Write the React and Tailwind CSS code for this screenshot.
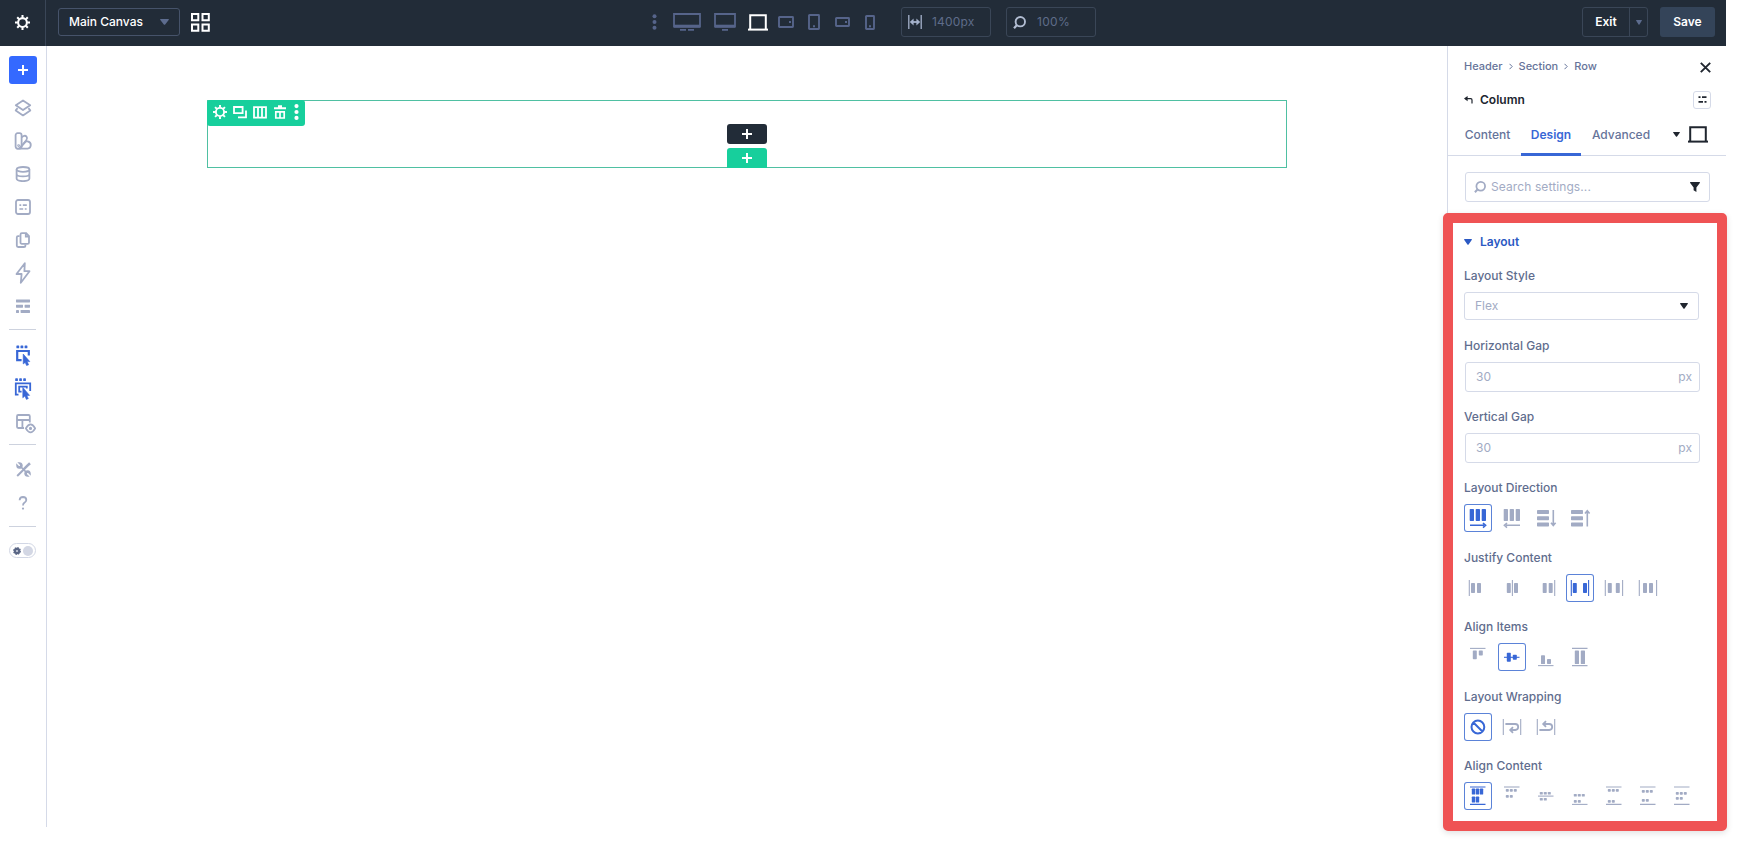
import clsx from "clsx";

// Small helper around <svg>, every icon inherits the text colour
function Icon({ w = 20, h = w, sw = 1.8, fill = "none", children }) {
    return (
        <svg width={w} height={h} viewBox={`0 0 ${w} ${h}`} fill={fill} stroke={fill === "none" ? "currentColor" : "none"} strokeWidth={sw} className="shrink-0">
            {children}
        </svg>
    );
}

function Rects({ items, r = 0.6 }) {
    return items.map(([x, y, w, h], i) => (
        <rect key={i} x={x} y={y} width={w} height={h} rx={r} fill="currentColor" stroke="none" />
    ));
}

function Gear({ size = 15 }) {
    return (
        <svg width={size} height={size} viewBox="0 0 14 14" fill="none" stroke="currentColor" className="shrink-0">
            <circle cx="7" cy="7" r="4.1" strokeWidth="1.9" />
            {[0, 45, 90, 135, 180, 225, 270, 315].map((a) => (
                <path key={a} d="M7 0V2.6" strokeWidth="1.9" transform={`rotate(${a} 7 7)`} />
            ))}
        </svg>
    );
}

function Caret({ w = 8, h = 6 }) {
    return (
        <svg width={w} height={h} viewBox="0 0 8 6" fill="currentColor" preserveAspectRatio="none" className="shrink-0">
            <path d="M0.6 0H7.4Q8.3 0.2 7.7 1L4.6 5.4Q4 6 3.4 5.4L0.3 1Q-0.3 0.2 0.6 0Z" />
        </svg>
    );
}

function Plus({ size = 10 }) {
    return (
        <svg width={size} height={size} viewBox="0 0 10 10" stroke="currentColor" strokeWidth="2" className="shrink-0">
            <path d="M5 0V10M0 5H10" />
        </svg>
    );
}

function Search({ size = 13 }) {
    return (
        <svg width={size} height={size} viewBox="0 0 13 13" fill="none" stroke="currentColor" className="shrink-0">
            <circle cx="7.3" cy="5.7" r="4.7" strokeWidth="1.9" />
            <path d="M4 9L1 12.2" strokeWidth="2.2" />
        </svg>
    );
}

function Laptop() {
    return (
        <Icon w={20} h={17} sw={2}>
            <path d="M2.2 15V1.2H17.8V15" />
            <path d="M0 15.6H20" strokeWidth="2" />
        </Icon>
    );
}

function TopBar() {
    return (
        <header className="flex h-[46px] w-[1726px] items-center bg-[#222c38] text-white">
            <div className="flex h-full w-[46px] items-center justify-center border-r border-[#3a4657] pb-0.5">
                <Gear />
            </div>
            <div className="ml-3 flex h-[28px] w-[122px] -translate-y-px items-center justify-between rounded-[3px] border border-[#46536a] pr-2.5 pl-2.5">
                <span className="text-[12px] font-medium">Main Canvas</span>
                <span className="text-[#5d6c8e]"><Caret w={9} h={6} /></span>
            </div>
            <div className="ml-[11px] -translate-y-px">
                <Icon w={19} sw={2}>
                    <path d="M1 1H7.3V7.3H1ZM11.5 1H17.8V7.3H11.5ZM1 11.5H7.3V17.8H1ZM11.5 11.5H17.8V17.8H11.5Z" />
                </Icon>
            </div>

            {/* Breakpoints */}
            <div className="ml-[442px] flex -translate-y-px items-center text-[#56648a]">
                <Icon w={5} h={16} fill="currentColor">
                    <circle cx="2.5" cy="2.2" r="2" />
                    <circle cx="2.5" cy="8" r="2" />
                    <circle cx="2.5" cy="13.8" r="2" />
                </Icon>
                <div className="ml-4">
                    <Icon w={28} h={18}>
                        <path d="M1 1H27V13.5H1Z" />
                        <path d="M1 13.2H27" strokeWidth="3" />
                        <path d="M7 16.9H13M15 16.9H21" />
                    </Icon>
                </div>
                <div className="ml-[13px]">
                    <Icon w={22} h={18}>
                        <path d="M1 1H21V13.5H1Z" />
                        <path d="M1 13.2H21" strokeWidth="3" />
                        <path d="M8 16.9H14" />
                    </Icon>
                </div>
                <div className="ml-3 text-white"><Laptop /></div>
                <div className="ml-[10px]">
                    <Icon w={16} h={12} sw={1.9}>
                        <rect x="1" y="1" width="14" height="10" rx="0.5" />
                        <path d="M11 6H13" />
                    </Icon>
                </div>
                <div className="ml-[14px]">
                    <Icon w={12} h={16} sw={1.9}>
                        <rect x="1" y="1" width="10" height="14" rx="0.5" />
                        <path d="M5 12.2H7" />
                    </Icon>
                </div>
                <div className="ml-[15px]">
                    <Icon w={15} h={10} sw={1.9}>
                        <rect x="1" y="1" width="13" height="8" rx="0.5" />
                        <path d="M10 5H12" />
                    </Icon>
                </div>
                <div className="ml-[15px]">
                    <Icon w={10} h={15} sw={1.9}>
                        <rect x="1" y="1" width="8" height="13" rx="0.5" />
                        <path d="M4 11.2H6" />
                    </Icon>
                </div>
            </div>
            <div className="ml-[26px] flex h-[30px] w-[90px] -translate-y-px items-center gap-2.5 rounded-[3px] border border-[#3a4657] pl-1.5 text-[12px] text-[#5f6c8a]">
                <span className="text-[#a4b1cb]">
                    <Icon w={14} h={14} sw={1.3}>
                        <path d="M0.8 0V14M13.2 0V14" />
                        <path d="M3 7H11" strokeWidth="1.8" />
                        <path d="M5.6 3.4V10.6L1.8 7ZM8.4 3.4V10.6L12.2 7Z" fill="currentColor" stroke="none" />
                    </Icon>
                </span>
                <span className="tracking-[0.2px]">1400px</span>
            </div>
            <div className="ml-[15px] flex h-[30px] w-[90px] -translate-y-px items-center gap-[11px] rounded-[3px] border border-[#3a4657] pl-1.5 text-[12px] text-[#5f6c8a]">
                <span className="text-[#b2bdd2]"><Search /></span>
                <span className="tracking-[0.3px]">100%</span>
            </div>

            <div className="ml-auto flex h-[30px] w-[66px] -translate-y-px items-center rounded-[3px] border border-[#3a4657]">
                <span className="w-[46px] text-center text-[12px] font-semibold">Exit</span>
                <span className="flex h-full flex-1 items-center justify-center border-l border-[#3a4657] text-[#5d6c8e]"><Caret w={6} h={5} /></span>
            </div>
            <button className="mr-[11px] ml-3 h-[30px] w-[55px] -translate-y-px rounded-[3px] bg-[#344459] text-[12px] font-semibold">Save</button>
        </header>
    );
}

function Slot({ children, className }) {
    return <div className={clsx("flex shrink-0 items-center justify-center", className ?? "h-[33.1px]")}>{children}</div>;
}

function Sidebar() {
    return (
        <aside className="flex w-[47px] shrink-0 flex-col border-r border-[#d5dae8] pt-[10px] text-[#a2abc4]">
            <div className="ml-[9px] flex size-[28px] items-center justify-center rounded-[3px] bg-[#3469ff] text-white">
                <Plus />
            </div>
            <div className="mt-[7px]">
                <Slot>
                    <Icon w={18}>
                        <path d="M9 1.5L16.2 6.2L9 11L1.8 6.2Z" strokeLinejoin="round" />
                        <path d="M3.6 9.2L1.7 11.4L9 16.4L16.3 11.4L14.4 9.2" strokeLinejoin="round" />
                    </Icon>
                </Slot>
                <Slot>
                    <Icon w={18}>
                        <rect x="1.6" y="1.2" width="6" height="15.4" rx="2" />
                        <path d="M7.6 5.2L9.6 4Q11.4 3.2 12.6 4.8Q13.8 6.4 12.4 8L7.2 14.6" />
                        <path d="M12 9.4H13.6Q16.8 10 16.8 13Q16.6 16.4 13.6 16.6H5L12 9.4" />
                        <circle cx="4.6" cy="13.6" r="0.5" />
                    </Icon>
                </Slot>
                <Slot>
                    <Icon w={16}>
                        <ellipse cx="8" cy="3.4" rx="6.4" ry="2.4" />
                        <path d="M1.6 3.4V12.6C1.6 16 14.4 16 14.4 12.6V3.4M1.6 8C1.6 11.2 14.4 11.2 14.4 8" />
                    </Icon>
                </Slot>
                <Slot>
                    <Icon w={16}>
                        <rect x="1" y="1" width="14" height="14" rx="2" />
                        <path d="M4.4 6.2H6.2M7.8 6.2H11.8M4.4 10H8.2M9.8 10H11.6" strokeWidth="1.7" />
                    </Icon>
                </Slot>
                <Slot>
                    <Icon w={16}>
                        <path d="M6.9 1.2H11.2L14 4V10.4Q14 11.8 12.6 11.8H6.9Q5.5 11.8 5.5 10.4V2.6Q5.5 1.2 6.9 1.2ZM10.8 1.2V4.6H14" />
                        <path d="M4.6 4.2H3Q1.8 4.2 1.8 5.6V13.6Q1.8 15 3.2 15H8.8Q10.4 15 10.4 13.4V12.4" />
                    </Icon>
                </Slot>
                <Slot>
                    <Icon w={16} h={22}>
                        <path d="M9.8 1.2L1.5 12H6.6L5.8 20.8L14.5 9.2H9.4Z" strokeLinejoin="round" />
                    </Icon>
                </Slot>
                <Slot>
                    <Icon w={14} h={14}>
                        <Rects items={[[0, 0.4, 14, 3], [0, 5.7, 7, 3], [8.6, 5.7, 5.4, 3], [0, 11, 3, 3], [4.6, 11, 9.4, 3]]} r={0.4} />
                    </Icon>
                </Slot>
            </div>
            <div className="mt-[6.5px] ml-[9px] h-px w-[27px] bg-[#cdd2de]" />
            <div className="mt-[9px] text-[#3867d6]">
                <Slot className="h-[33px]">
                    <Icon w={16} h={21} sw={2.2}>
                        <Rects items={[[1.4, 0.5, 2.8, 2.8], [5.5, 0.5, 2.8, 2.8], [9.6, 0.5, 2.8, 2.8]]} />
                        <path d="M6.6 15.2H2.2V6H13.8V10.5" />
                        <path d="M8.2 9V19L10.2 17.4L11.6 20.6L13.6 19.8L12.2 16.6H14.8Z" fill="currentColor" stroke="currentColor" strokeWidth="0.6" />
                    </Icon>
                </Slot>
                <Slot className="h-[33px]">
                    <Icon w={18} h={22} sw={1.8}>
                        <Rects items={[[1.2, 0.3, 2.7, 2.7], [5.2, 0.3, 2.7, 2.7], [9.2, 0.3, 2.7, 2.7]]} />
                        <path d="M4.5 16.6H1.8V5.4H16.2V13" />
                        <path d="M7.6 13.6H5.2V8.7H12.8V10.4" />
                        <path d="M8.8 9.4V19.8L10.9 18L12.4 21.4L14.3 20.6L12.8 17.4H15.6Z" fill="currentColor" stroke="currentColor" strokeWidth="0.6" />
                    </Icon>
                </Slot>
            </div>
            <Slot className="h-[35px] pt-[2px] pl-[5px] text-[#a2abc4]">
                <Icon w={20} h={20}>
                    <path d="M8 14H2.2Q1 14 1 12.8V2.2Q1 1 2.2 1H12.6Q13.8 1 13.8 2.2V8.4M1 6H13.8M6.4 6V14" />
                    <path d="M9.8 14.4Q14.6 6.4 19.2 14.4Q14.6 22.4 9.8 14.4Z" />
                    <circle cx="14.5" cy="14.4" r="0.7" fill="currentColor" />
                </Icon>
            </Slot>
            <div className="mt-[4px] ml-[9px] h-px w-[27px] bg-[#cdd2de]" />
            <div className="mt-[8px]">
                <Slot className="h-[33px]">
                    <Icon w={15} sw={1.7}>
                        <path d="M1.2 14L8 7.2" strokeWidth="2" />
                        <path d="M7.4 7.6L11.4 3.6L14 1.2" strokeWidth="2.6" />
                        <path d="M4 4L11 11" />
                        <path d="M3.4 1.2L4.8 2.6V4.8H2.6L1.1 3.4Q1.2 5.8 3.2 6Q5.8 6 5.9 3.4Q5.6 1.2 3.4 1.2Z" />
                        <path d="M11.6 13.8L10.2 12.4V10.2H12.4L13.9 11.6Q13.8 9.2 11.8 9Q9.2 9 9.1 11.6Q9.4 13.8 11.6 13.8Z" />
                    </Icon>
                </Slot>
                <Slot className="h-[33px]">
                    <Icon w={10} h={14} sw={1.8}>
                        <path d="M1.6 4.2Q1.8 1 5 1Q8.3 1.1 8.3 4Q8.2 5.4 6.6 6.6Q5 7.6 5 9.6" />
                        <circle cx="5" cy="12.6" r="1.1" fill="currentColor" stroke="none" />
                    </Icon>
                </Slot>
            </div>
            <div className="mt-[7px] ml-[9px] h-px w-[27px] bg-[#cdd2de]" />
            <div className="mt-[16px] ml-[9px] flex h-[15px] w-[27px] items-center justify-between rounded-full border border-[#d2d7e5] px-[2.5px]">
                <span className="text-[#5a6685]">
                    <svg width="8" height="8" viewBox="0 0 8 8">
                        <circle cx="4" cy="4" r="3.2" fill="currentColor" stroke="currentColor" strokeWidth="1.4" strokeDasharray="1.5 1" />
                        <circle cx="4" cy="4" r="1.1" fill="#c9cfdd" />
                    </svg>
                </span>
                <span className="size-[10px] rounded-full bg-[#d3d7e4]" />
            </div>
        </aside>
    );
}

function Canvas() {
    return (
        <main className="w-[1400px] shrink-0 pt-[54px] pl-[160px]">
            <div className="relative flex h-[68px] w-[1080px] flex-col items-center border-[1.5px] border-[#4fc0a2] pt-[23px]">
                <div className="absolute -top-px -left-px flex h-[26px] w-[98px] items-center rounded-[3px] bg-[#17cf9c] pb-0.5 pl-[6px] text-white">
                    <Gear size={14} />
                    <div className="ml-[6px]">
                        <Icon w={14} h={13}>
                            <path d="M1 1H9.6V7.2H1Z" />
                            <path d="M13 4.4V11.4H5" />
                        </Icon>
                    </div>
                    <div className="ml-[6px]">
                        <Icon w={14} h={13}>
                            <path d="M1 1.2H13V11.6H1ZM5 1V12M9 1V12" />
                        </Icon>
                    </div>
                    <div className="ml-[7px]">
                        <Icon w={12} h={14} sw={1.7}>
                            <path d="M0 3.2H12M4 1.2H8" strokeWidth="2" />
                            <path d="M1.8 6.8H10.2V13H1.8ZM6 6.4V13" />
                        </Icon>
                    </div>
                    <div className="ml-[8px]">
                        <Icon w={5} h={16} fill="currentColor">
                            <circle cx="2.5" cy="2.1" r="2.1" />
                            <circle cx="2.5" cy="8" r="2.1" />
                            <circle cx="2.5" cy="13.9" r="2.1" />
                        </Icon>
                    </div>
                </div>
                <button className="mr-px flex h-[20px] w-[40px] shrink-0 items-center justify-center rounded-[3px] bg-[#222c38] text-white"><Plus /></button>
                <button className="mt-1 mr-px flex h-[20px] w-[40px] shrink-0 items-center justify-center rounded-t-[3px] bg-[#17cf9c] text-white"><Plus /></button>
            </div>
        </main>
    );
}

function ArrowH({ left }) {
    return left ? (
        <path d="M22 21.3H8M9 19L6.4 21.3L9 23.6" strokeWidth="1.6" />
    ) : (
        <path d="M6 21.3H20M19 19L21.6 21.3L19 23.6" strokeWidth="1.6" />
    );
}

// Align-content icons: a row of three dots over a row of two
const dots = (a, b) => [
    [7.8, a, 3, 2.7], [11.8, a, 3, 2.7], [15.8, a, 3, 2.7],
    [7.8, b, 3, 2.7], [11.8, b, 3, 2.7],
];

const groups = [
    {
        label: "Layout Direction",
        active: 0,
        icons: [
            { rects: [[5.7, 5, 4.3, 12], [11.7, 5, 4.3, 12], [17.7, 5, 4.3, 12]], extra: <ArrowH /> },
            { rects: [[5.7, 5, 4.3, 12], [11.7, 5, 4.3, 12], [17.7, 5, 4.3, 12]], extra: <ArrowH left /> },
            { rects: [[5, 6, 12, 4], [5, 12.2, 12, 4], [5, 18.4, 12, 4]], extra: <path d="M21.3 6V21M19 18.8L21.3 21.6L23.6 18.8" strokeWidth="1.6" /> },
            { rects: [[5, 6, 12, 4], [5, 12.2, 12, 4], [5, 18.4, 12, 4]], extra: <path d="M21.3 22.4V7M19 9.6L21.3 6.8L23.6 9.6" strokeWidth="1.6" /> },
        ],
    },
    {
        label: "Justify Content",
        active: 3,
        icons: [
            { rects: [[7, 9, 4, 10], [13, 9, 4, 10]], lines: "M5.3 6V22" },
            { rects: [[8.8, 9, 4, 10], [16, 9, 4, 10]], lines: "M14.4 6V22" },
            { rects: [[10.7, 9, 4, 10], [16.7, 9, 4, 10]], lines: "M22.7 6V22" },
            { rects: [[6.8, 9, 4, 10], [17, 9, 4, 10]], lines: "M5.3 6V22M22.6 6V22" },
            { rects: [[7.8, 9, 4, 10], [15.8, 9, 4, 10]], lines: "M5.3 6V22M22.6 6V22" },
            { rects: [[9, 9, 4, 10], [15, 9, 4, 10]], lines: "M5.3 6V22M22.6 6V22" },
        ],
    },
    {
        label: "Align Items",
        active: 1,
        icons: [
            { rects: [[8.8, 7.4, 4, 8.8], [14.8, 7.4, 4, 5]], lines: "M6 5.4H21.5" },
            { rects: [[8.8, 9.8, 4, 9], [14.8, 11.8, 4, 5]], lines: "M6 14.3H21.5" },
            { rects: [[9, 12.3, 4, 8.8], [15, 16, 4, 5]], lines: "M6 22.6H21.5" },
            { rects: [[8.8, 7.4, 4.2, 13.7], [14.8, 7.4, 4.2, 13.7]], lines: "M6 5.4H21.5M6 22.6H21.5" },
        ],
    },
    {
        label: "Layout Wrapping",
        active: 0,
        icons: [
            { extra: <path d="M20.3 14A6.4 6.4 0 1 1 7.5 14A6.4 6.4 0 1 1 20.3 14M9.4 9.5L18.4 18.5" strokeWidth="2" /> },
            { lines: "M5.3 6V22M22.7 6V22", extra: <path d="M7.4 11H17.2Q20.2 11.2 20.2 14Q20.2 16.8 17.2 17H13M15 14.2L12.2 17L15 19.8" strokeWidth="1.8" /> },
            { lines: "M5.3 6V22M22.7 6V22", extra: <path d="M7.4 17H17.2Q20.2 16.8 20.2 14Q20.2 11.2 17.2 11H12M14 8.2L11.2 11L14 13.8" strokeWidth="1.8" /> },
        ],
    },
    {
        label: "Align Content",
        active: 0,
        icons: [
            { rects: [[7.8, 6.6, 3.4, 6], [11.8, 6.6, 3.4, 6], [15.8, 6.6, 3.4, 6], [7.8, 14.6, 3.4, 6], [11.8, 14.6, 3.4, 6]], lines: "M6 5H21.5M6 22.4H21.5" },
            { rects: dots(7, 13), lines: "M6 5H21.5" },
            { rects: dots(9.9, 15.9), lines: "M6 14.1H21.5" },
            { rects: dots(11.9, 18), lines: "M6 22.4H21.5" },
            { rects: dots(7, 18), lines: "M6 5H21.5M6 22.4H21.5" },
            { rects: dots(8, 17), lines: "M6 5H21.5M6 22.4H21.5" },
            { rects: dots(10, 15), lines: "M6 5H21.5M6 22.4H21.5" },
        ],
    },
];

function Label({ children }) {
    return <div className="h-4 text-[12px] leading-4 font-medium text-[#5f6d8e]">{children}</div>;
}

function IconGroup({ label, active, icons }) {
    return (
        <div className="h-[69.5px]">
            <Label>{label}</Label>
            <div className="mt-2 flex gap-[6px]">
                {icons.map(({ rects = [], lines, extra }, i) => (
                    <button
                        key={i}
                        className={clsx(
                            "size-[28px] shrink-0 rounded-[3px]",
                            i === active ? "text-[#3867d6] shadow-[inset_0_0_0_1px_#5b83d8]" : "text-[#a2abc4]"
                        )}
                    >
                        <Icon w={28} sw={1.1}>
                            <Rects items={rects} r={0.7} />
                            {lines && <path d={lines} />}
                            {extra}
                        </Icon>
                    </button>
                ))}
            </div>
        </div>
    );
}

function PxField({ label }) {
    return (
        <div className="h-[71px]">
            <Label>{label}</Label>
            <div className="mt-2 ml-px flex h-[30px] w-[235px] items-center justify-between rounded-[3px] border border-[#d5dae8] pr-[7px] pl-2.5 text-[12px] text-[#a2abc4]">
                <span>30</span>
                <span>px</span>
            </div>
        </div>
    );
}

function Chevron() {
    return (
        <span className="mx-[6px]">
            <Icon w={4} h={7} sw={1}>
                <path d="M0.5 0.8L3.2 3.5L0.5 6.2" />
            </Icon>
        </span>
    );
}

function SettingsPanel() {
    return (
        <section className="relative w-[279px] shrink-0 border-l border-[#d5dae8] text-[12px]">
            <div className="flex h-[40px] items-center pr-[15px] pl-4 text-[11px] font-medium text-[#66749a]">
                <span>Header</span>
                <Chevron />
                <span>Section</span>
                <Chevron />
                <span>Row</span>
                <span className="mt-[2px] ml-auto text-[#20262f]">
                    <Icon w={11} sw={1.9}><path d="M0.8 0.8L10.2 10.2M10.2 0.8L0.8 10.2" /></Icon>
                </span>
            </div>
            <div className="flex h-[27px] items-center pr-[15px] pl-4 text-[#20262f]">
                <Icon w={9} h={8} sw={1.2}>
                    <path d="M1 2.6H6.8Q8 2.6 8 4V7.4" />
                    <path d="M3.6 0V5.2L0 2.6Z" fill="currentColor" stroke="none" />
                </Icon>
                <span className="ml-[7px] font-semibold">Column</span>
                <span className="ml-auto flex size-[18px] items-center justify-center rounded-[3px] border border-[#d5dae8]">
                    <Icon w={9} h={7} sw={1.8}><path d="M0.5 1.2H2.5M4 1.2H8.5M0.5 5.8H5M6.5 5.8H8.5" /></Icon>
                </span>
            </div>
            <nav className="flex h-[43px] border-b border-[#d5dae8] pt-[2px] text-[12px] font-medium text-[#66749a]">
                <span className="flex h-[41px] w-[73px] items-center justify-center pb-px pl-[6px]">Content</span>
                <span className="flex h-[41px] w-[60px] items-center justify-center border-b-[3px] border-[#3867d6] pt-0.5 font-semibold text-[#3867d6]">Design</span>
                <span className="flex h-[41px] w-[80px] items-center justify-center pb-px">Advanced</span>
                <span className="ml-auto flex h-[41px] items-center pr-[18px] pb-[2px] text-[#20262f]">
                    <Caret w={7} h={5} />
                    <span className="ml-[8px]"><Laptop /></span>
                </span>
            </nav>
            <div className="mt-4 ml-[17px] flex h-[30px] w-[245px] items-center rounded-[3px] border border-[#d5dae8] px-[8px] text-[#a2abc4]">
                <Search size={12} />
                <span className="ml-[5px] tracking-[0.1px]">Search settings...</span>
                <svg width="10" height="10" viewBox="0 0 10 10" fill="#20262f" className="mr-px ml-auto">
                    <path d="M0.4 0H9.6Q10.2 0.4 9.8 1L6.4 5.4V10L3.6 8.2V5.4L0.2 1Q-0.2 0.4 0.4 0Z" />
                </svg>
            </div>

            <div className="pt-8 pl-4">
                <div className="flex h-4 items-center font-semibold text-[#2b59c3]">
                    <Caret w={8} h={6} />
                    <span className="ml-[8px]">Layout</span>
                </div>
                <div className="mt-[18px] h-[70px]">
                    <Label>Layout Style</Label>
                    <div className="mt-2 flex h-[28px] w-[235px] items-center justify-between rounded-[3px] border border-[#d5dae8] px-2.5 text-[#a2abc4]">
                        <span>Flex</span>
                        <span className="text-[#20262f]"><Caret w={8} h={6} /></span>
                    </div>
                </div>
                <PxField label="Horizontal Gap" />
                <PxField label="Vertical Gap" />
                {groups.map((g) => <IconGroup key={g.label} {...g} />)}
            </div>

            {/* Highlight frame around the layout options */}
            <div className="absolute top-[167px] -left-[5px] h-[618px] w-[284px] rounded-[5px] bg-transparent shadow-[0_2px_6px_rgba(0,0,0,0.12)]">
                <div className="h-full rounded-[5px] border-10 border-[#ef5354]" />
            </div>
        </section>
    );
}

export default function App() {
    return (
        <div className="h-[841px] w-[1737px] overflow-hidden bg-white font-['Inter',sans-serif]">
            <TopBar />
            <div className="flex h-[781px]">
                <Sidebar />
                <Canvas />
                <SettingsPanel />
            </div>
        </div>
    );
}
